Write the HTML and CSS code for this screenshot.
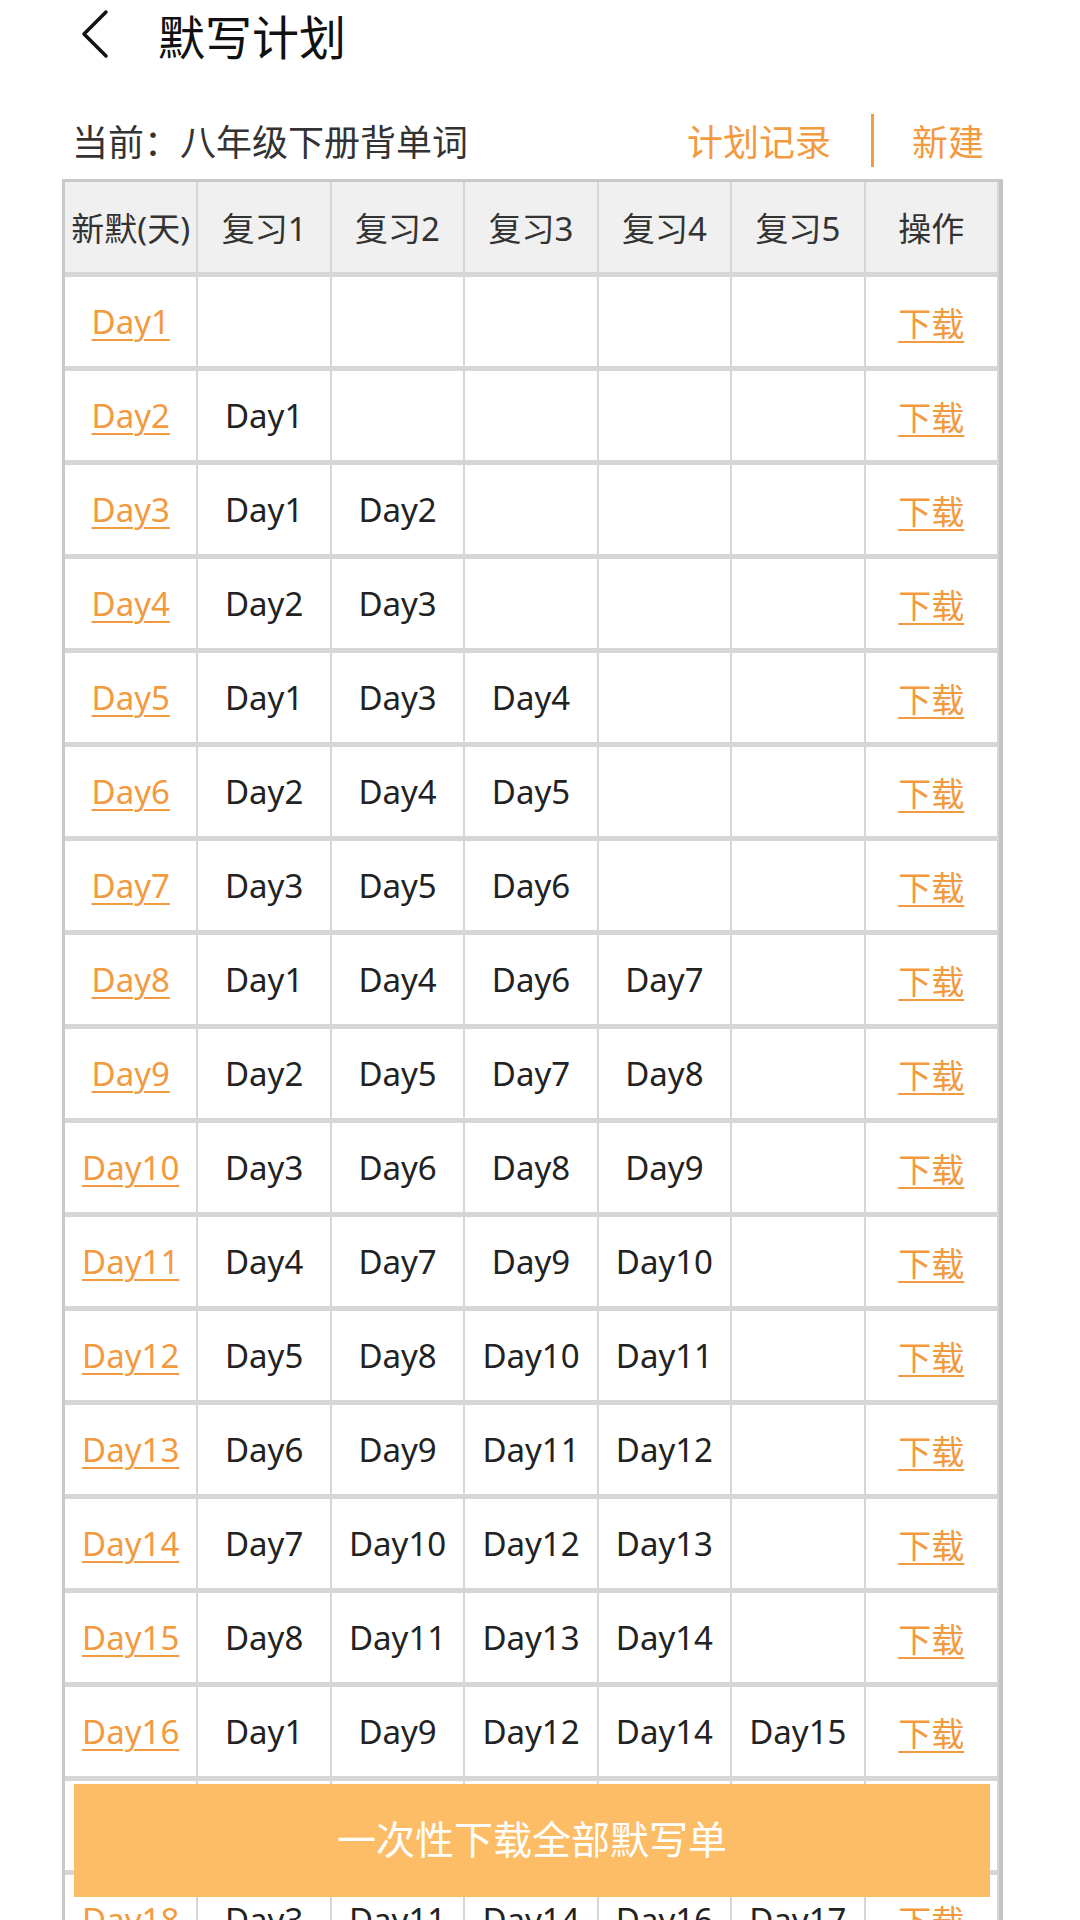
FILE: index.html
```html
<!DOCTYPE html>
<html lang="zh-CN">
<head>
    <meta charset="UTF-8">
    <meta name="viewport" content="width=device-width, initial-scale=1.0">
    <title>默写计划</title>
    <link rel="stylesheet" href="styles.css">
</head>
<body>
    <div class="page">
        <div class="topbar">
            <svg class="back" width="30" height="50" viewBox="0 0 30 50">
                <polyline points="26,3 4,25 26,47" fill="none" stroke="#111" stroke-width="3.5" stroke-linecap="round" stroke-linejoin="round"/>
            </svg>
            <span class="title">默写计划</span>
        </div>

        <div class="current-bar">
            <span class="current">当前：八年级下册背单词</span>
            <div class="actions">
                <a class="action">计划记录</a>
                <span class="divider"></span>
                <a class="action">新建</a>
            </div>
        </div>

        <table class="plan">
            <thead>
                <tr>
                    <th>新默(天)</th>
                    <th>复习1</th>
                    <th>复习2</th>
                    <th>复习3</th>
                    <th>复习4</th>
                    <th>复习5</th>
                    <th>操作</th>
                </tr>
            </thead>
            <tbody id="rows"></tbody>
        </table>

        <button class="download-all">一次性下载全部默写单</button>
    </div>

    <script>
        // review offsets: n-15, n-7, n-4, n-2, n-1
        let offsets = [15, 7, 4, 2, 1];
        let rows = document.getElementById("rows");

        for (let n = 1; n <= 18; n++) {
            let reviews = offsets.filter(o => n - o >= 1).map(o => 'Day' + (n - o));
            let html = '<td><a class="link">Day' + n + '</a></td>';
            for (let i = 0; i < 5; i++) {
                html += '<td>' + (reviews[i] || '') + '</td>';
            }
            html += '<td><a class="link">下载</a></td>';
            let tr = document.createElement("tr");
            tr.innerHTML = html;
            rows.appendChild(tr);
        }
    </script>
</body>
</html>
```

FILE: styles.css
```css
body {
    margin: 0;
    background: #fff;
    font-family: "Noto Sans", "Noto Sans CJK SC", sans-serif;
    color: #222;
}
.page {
    height: 1920px;
    overflow: hidden;
    position: relative;
}
.topbar {
    height: 68px;
    display: flex;
    align-items: center;
    padding-left: 80px;
}
.back {
    display: block;
}
.title {
    margin-left: 48px;
    font-size: 47px;
    color: #111;
    font-family: "Noto Sans CJK SC", sans-serif;
}
.current-bar {
    margin-top: 42px;
    height: 60px;
    display: flex;
    align-items: center;
    justify-content: space-between;
    padding: 0 96px 0 72px;
}
.current {
    font-size: 36px;
    color: #333;
    font-family: "Noto Sans CJK SC", sans-serif;
}
.actions {
    display: flex;
    align-items: center;
}
.action {
    font-size: 36px;
    color: #f29a3f;
    font-family: "Noto Sans CJK SC", sans-serif;
}
.divider {
    width: 3px;
    height: 53px;
    background: #f29a3f;
    margin: 0 38px 0 40px;
}
.plan {
    margin: 9px 0 0 62px;
    width: 941px;
    table-layout: fixed;
    border-collapse: separate;
    border-spacing: 0;
    border-top: 3px solid #c9c9c9;
    border-left: 3px solid #c9c9c9;
    border-right: 4px solid #c4c4c4;
}
.plan th,
.plan td {
    padding: 0;
    text-align: center;
    vertical-align: middle;
    border-right: 2px solid #d6d6d6;
    border-bottom: 5px solid #d6d6d6;
    white-space: nowrap;
}
.plan th {
    height: 90px;
    background: #f0f0f0;
    font-weight: normal;
    font-size: 33px;
    color: #333;
}
.plan td {
    height: 89px;
    font-size: 33px;
    color: #222;
}
.link {
    color: #f29a3f;
    text-decoration: underline;
    text-decoration-thickness: 2px;
    text-underline-offset: 5px;
}
.download-all {
    position: absolute;
    left: 74px;
    top: 1784px;
    width: 916px;
    height: 113px;
    padding: 0 0 8px;
    border: none;
    background: #fdbd67;
    color: #fff;
    font-size: 39px;
    font-family: "Noto Sans CJK SC", sans-serif;
}
```
